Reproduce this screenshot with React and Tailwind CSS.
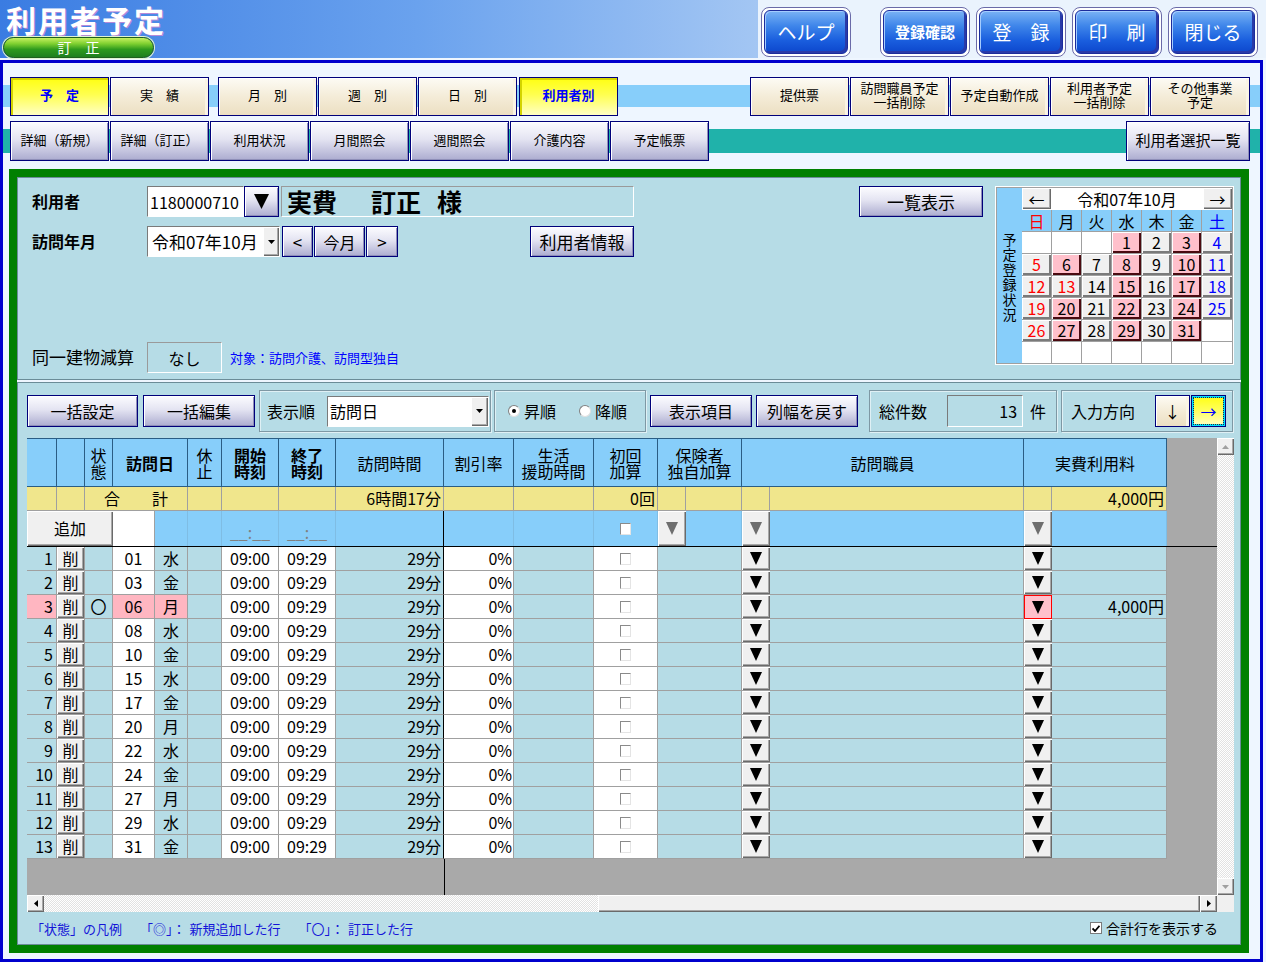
import React from 'react';

const SUNKEN = 'border border-t-[#7a7a7a] border-l-[#7a7a7a] border-b-white border-r-white';
const LAV = 'border border-[#00007a] bg-[linear-gradient(to_bottom,#fcfcff_0%,#e4e4f2_45%,#acacd0_100%)] shadow-[inset_1px_1px_0_#ffffff,inset_-1px_-1px_0_#8e8eb8]';
const BEIGE = 'border border-[#00007a] bg-[linear-gradient(to_bottom,#fdfbf4_0%,#f4ecd8_50%,#ecdfc2_100%)] shadow-[inset_1px_1px_0_#ffffff,inset_-3px_0_0_#faf4e4]';
const YELLOW = 'border border-[#00007a] bg-[linear-gradient(to_bottom,#ffff10_0%,#ffff50_45%,#ffffc4_100%)] shadow-[inset_2px_2px_0_#d4d400]';
const RAISED = 'bg-[#f0f0f0] shadow-[inset_1px_1px_0_#ffffff,inset_-1px_-1px_0_#6a6a6a,inset_-2px_-2px_0_#a8a8a8]';
const DITHER = 'bg-[image:repeating-conic-gradient(#ffffff_0_25%,#e2e2e2_0_50%)] bg-[length:2px_2px]';

function Tri({ w = 12, h = 13, color = '#000000', up = false }) {
  const d = up ? `M0 ${h}H${w}L${w / 2} 0Z` : `M0 0H${w}L${w / 2} ${h}Z`;
  return (
    <svg width={w} height={h} viewBox={`0 0 ${w} ${h}`}>
      <path d={d} fill={color} />
    </svg>
  );
}

function TopBtn({ children, className = '' }) {
  return (
    <div className="h-[50px] w-[90px] rounded-[8px] border border-[#6a6aa8] bg-white p-[2px]">
      <div
        className={`flex h-full w-full items-center justify-center rounded-[6px] border border-[#1c2c9c] bg-[linear-gradient(to_bottom,#7ab2f5_0%,#3f86ea_35%,#1a5ede_70%,#0c46cc_100%)] pb-[2px] leading-none text-white shadow-[inset_-2px_-2px_0_#2a3aa8,inset_1px_1px_0_#a4ccff] ${className}`}
      >
        {children}
      </div>
    </div>
  );
}

function Header() {
  return (
    <div className="flex h-[58px]">
      <div className="flex w-[758px] flex-col bg-[linear-gradient(to_right,#3a7ce2,#6aa2ee_55%,#a3c6f3)] pl-[3px] pt-[3px]">
        <div className="h-[32px] pl-[3px] text-[30px] font-bold leading-[32px] tracking-[2px] text-white [text-shadow:1px_1px_0_#b68ad8]">
          利用者予定
        </div>
        <div className="mt-[2px] flex h-[21px] w-[151px] items-center justify-center rounded-full border border-[#1f5f1f] bg-[linear-gradient(to_bottom,#c6f060_0%,#7fd030_30%,#2e9a1e_60%,#1f7f1f_100%)] pb-px text-[14px] leading-none text-white shadow-[0_0_0_1px_#e0f4d0]">
          訂　正
        </div>
      </div>
      <div className="flex flex-1 items-start bg-[#eaf3fd] pl-[3px] pt-[7px]">
        <TopBtn className="text-[19px]">ヘルプ</TopBtn>
        <div className="ml-[29px] flex gap-[6px]">
          <TopBtn className="text-[15px] font-bold">登録確認</TopBtn>
          <TopBtn className="text-[19px]">登　録</TopBtn>
          <TopBtn className="text-[19px]">印　刷</TopBtn>
          <TopBtn className="text-[19px]">閉じる</TopBtn>
        </div>
      </div>
    </div>
  );
}

function Tab({ children, style = 'beige', className = '' }) {
  const look =
    style === 'yellow'
      ? `${YELLOW} font-bold text-[#0000ff]`
      : style === 'lav'
      ? LAV
      : BEIGE;
  return (
    <div
      className={`flex w-[99px] flex-col items-center justify-center pb-[3px] text-center text-[13px] leading-[14px] ${look} ${className}`}
    >
      {children}
    </div>
  );
}

function TabRows() {
  return (
    <>
      <div className="flex h-[39px] justify-between bg-[linear-gradient(to_bottom,transparent_8px,#87cefa_8px,#87cefa_30px,transparent_30px)] pl-[7px] pr-[10px]">
        <div className="flex">
          <div className="flex gap-px">
            <Tab style="yellow">予　定</Tab>
            <Tab>実　績</Tab>
          </div>
          <div className="ml-[9px] flex gap-px">
            <Tab>月　別</Tab>
            <Tab>週　別</Tab>
            <Tab>日　別</Tab>
            <Tab style="yellow" className="ml-px">利用者別</Tab>
          </div>
        </div>
        <div className="flex gap-px">
          <Tab>提供票</Tab>
          <Tab>
            <span>訪問職員予定</span>
            <span>一括削除</span>
          </Tab>
          <Tab>予定自動作成</Tab>
          <Tab>
            <span>利用者予定</span>
            <span>一括削除</span>
          </Tab>
          <Tab className="w-[100px]">
            <span>その他事業</span>
            <span>予定</span>
          </Tab>
        </div>
      </div>
      <div className="mt-[5px] flex h-[40px] justify-between bg-[linear-gradient(to_bottom,transparent_8px,#20b2aa_8px,#20b2aa_32px,transparent_32px)] pl-[7px] pr-[10px]">
        <div className="flex gap-px">
          <Tab style="lav">詳細（新規）</Tab>
          <Tab style="lav">詳細（訂正）</Tab>
          <Tab style="lav">利用状況</Tab>
          <Tab style="lav">月間照会</Tab>
          <Tab style="lav">週間照会</Tab>
          <Tab style="lav">介護内容</Tab>
          <Tab style="lav">予定帳票</Tab>
        </div>
        <Tab style="lav" className="w-[124px] text-[15px]">利用者選択一覧</Tab>
      </div>
    </>
  );
}

const PINK_DAYS = [1, 3, 6, 8, 10, 15, 17, 20, 22, 24, 27, 29, 31];
const RED_DAYS = [5, 12, 13, 19, 26];
const BLUE_DAYS = [4, 11, 18, 25];
const WEEKS = [
  [null, null, null, 1, 2, 3, 4],
  [5, 6, 7, 8, 9, 10, 11],
  [12, 13, 14, 15, 16, 17, 18],
  [19, 20, 21, 22, 23, 24, 25],
  [26, 27, 28, 29, 30, 31, null],
  [null, null, null, null, null, null, null],
];

function DayCell({ d }) {
  let look = '';
  if (d) {
    look = PINK_DAYS.includes(d)
      ? 'bg-[#ffc0cb] shadow-[inset_1px_1px_0_#ffffff,inset_-2px_-2px_0_#4a0a10]'
      : 'bg-[#f0f0f0] shadow-[inset_1px_1px_0_#ffffff,inset_-2px_-2px_0_#7a7a7a]';
  }
  const color = RED_DAYS.includes(d) ? 'text-[#ff0000]' : BLUE_DAYS.includes(d) ? 'text-[#0000ff]' : 'text-black';
  return (
    <div className="h-[22px] w-[30px] border-r border-t border-[#a0a0a0] bg-white last:border-r-0">
      {d && (
        <div className={`flex h-full w-full items-center justify-center pb-px text-[16px] leading-none ${look} ${color}`}>{d}</div>
      )}
    </div>
  );
}

function Calendar() {
  const wds = ['日', '月', '火', '水', '木', '金', '土'];
  return (
    <div className="ml-[12px] flex h-[179px] w-[239px] border border-white">
      <div className="flex flex-1 border border-[#a0a0a0]">
        <div className="flex w-[25px] flex-col items-center justify-center gap-px bg-[#87cefa] pt-[2px] text-[14px] leading-[14px]">
          {'予定登録状況'.split('').map((c) => (
            <span key={c}>{c}</span>
          ))}
        </div>
        <div className="flex w-[210px] flex-col">
          <div className="flex h-[22px] gap-px bg-white pb-px">
            <div className={`flex w-[29px] items-center justify-center text-[16px] leading-none ${RAISED}`}>←</div>
            <div className="flex w-[150px] items-center justify-center text-[16px] leading-none">令和07年10月</div>
            <div className={`flex w-[29px] items-center justify-center text-[16px] leading-none ${RAISED}`}>→</div>
          </div>
          <div className="flex h-[21px] bg-[#87cefa]">
            {wds.map((w, i) => (
              <div
                key={w}
                className={`flex w-[30px] items-center justify-center border-r border-[#a0a0a0] text-[16px] leading-none last:border-r-0 ${
                  i === 0 ? 'text-[#ff0000]' : i === 6 ? 'text-[#0000ff]' : 'text-black'
                }`}
              >
                {w}
              </div>
            ))}
          </div>
          {WEEKS.map((wk, i) => (
            <div key={i} className="flex">
              {wk.map((d, j) => (
                <DayCell key={j} d={d} />
              ))}
            </div>
          ))}
        </div>
      </div>
    </div>
  );
}

function TopPanel() {
  return (
    <div className="flex h-[203px] border border-[#6b8c98] bg-[#b6dce6] pt-[8px]">
      <div className="flex w-[616px] flex-col pl-[14px]">
        <div className="flex h-[31px]">
          <div className="flex w-[115px] items-center pb-[2px] text-[16px] font-bold leading-none">利用者</div>
          <div className={`flex w-[97px] items-center bg-white pl-[2px] text-[16px] leading-none ${SUNKEN}`}>1180000710</div>
          <div className={`flex w-[35px] items-center justify-center ${LAV}`}>
            <Tri w={15} h={15} />
          </div>
          <div className="ml-[2px] flex w-[353px] items-center border border-b-white border-l-[#9a9a9a] border-r-white border-t-[#9a9a9a] pl-[5px] text-[25px] font-bold leading-none">
            <span>実費</span>
            <span className="ml-[34px]">訂正</span>
            <span className="ml-[16px]">様</span>
          </div>
        </div>
        <div className="mt-[9px] flex h-[31px]">
          <div className="flex w-[115px] items-center pb-[2px] text-[16px] font-bold leading-none">訪問年月</div>
          <div className={`flex w-[133px] items-center bg-white ${SUNKEN}`}>
            <span className="flex-1 pl-[4px] text-[17px] leading-none">令和07年10月</span>
            <div className={`flex h-full w-[16px] items-center justify-center ${RAISED}`}>
              <Tri w={7} h={4} />
            </div>
          </div>
          <div className={`ml-[2px] flex w-[31px] items-center justify-center text-[17px] leading-none ${LAV}`}>&lt;</div>
          <div className={`ml-[1px] flex w-[51px] items-center justify-center text-[16px] leading-none ${LAV}`}>今月</div>
          <div className={`ml-[1px] flex w-[32px] items-center justify-center text-[17px] leading-none ${LAV}`}>&gt;</div>
          <div className={`ml-auto flex w-[104px] items-center justify-center text-[17px] leading-none ${LAV}`}>利用者情報</div>
        </div>
        <div className="mt-[85px] flex h-[31px] items-center">
          <div className="w-[115px] pb-[2px] text-[17px] leading-none">同一建物減算</div>
          <div className="flex h-full w-[75px] items-center justify-center border border-b-white border-l-[#9a9a9a] border-r-white border-t-[#9a9a9a] text-[16px] leading-none">
            なし
          </div>
          <div className="ml-[8px] text-[13px] leading-none text-[#0000ff]">対象：訪問介護、訪問型独自</div>
        </div>
      </div>
      <div className={`ml-[225px] flex h-[31px] w-[124px] items-center justify-center text-[17px] leading-none ${LAV}`}>一覧表示</div>
      <Calendar />
    </div>
  );
}

const GROUP = 'flex h-[42px] items-center border border-[#7e98a4] shadow-[inset_1px_1px_0_#dff0f5,1px_1px_0_#dff0f5]';

function Radio({ on }) {
  return (
    <div className="flex h-[12px] w-[12px] items-center justify-center rounded-full border border-b-[#e0e0e0] border-l-[#808080] border-r-[#e0e0e0] border-t-[#808080] bg-white">
      {on && <div className="h-[4px] w-[4px] rounded-full bg-black" />}
    </div>
  );
}

function Toolbar() {
  return (
    <div className="ml-[9px] mt-[7px] flex h-[42px] items-center text-[16px] leading-none">
      <div className={`flex h-[32px] w-[111px] items-center justify-center pb-px ${LAV}`}>一括設定</div>
      <div className={`ml-[5px] flex h-[32px] w-[112px] items-center justify-center pb-px ${LAV}`}>一括編集</div>
      <div className={`ml-[4px] w-[232px] pl-[7px] ${GROUP}`}>
        <span>表示順</span>
        <div className={`ml-[12px] flex h-[31px] w-[162px] items-center bg-white ${SUNKEN}`}>
          <span className="flex-1 pl-[2px]">訪問日</span>
          <div className={`flex h-full w-[17px] items-center justify-center ${RAISED}`}>
            <Tri w={7} h={4} />
          </div>
        </div>
      </div>
      <div className={`ml-[3px] w-[152px] pl-[13px] ${GROUP}`}>
        <Radio on />
        <span className="ml-[4px]">昇順</span>
        <div className="ml-[23px]">
          <Radio />
        </div>
        <span className="ml-[4px]">降順</span>
      </div>
      <div className={`ml-[4px] flex h-[32px] w-[102px] items-center justify-center pb-px ${LAV}`}>表示項目</div>
      <div className={`ml-[4px] flex h-[32px] w-[102px] items-center justify-center pb-px ${LAV}`}>列幅を戻す</div>
      <div className={`ml-[11px] w-[188px] pl-[9px] ${GROUP}`}>
        <span>総件数</span>
        <div className={`ml-[20px] flex h-[32px] w-[76px] items-center justify-end pr-[5px] ${SUNKEN}`}>13</div>
        <span className="ml-[7px]">件</span>
      </div>
      <div className={`ml-[4px] w-[172px] pl-[9px] ${GROUP}`}>
        <span>入力方向</span>
        <div className={`ml-[20px] flex h-[32px] w-[35px] items-center justify-center ${BEIGE}`}>↓</div>
        <div className="ml-[1px] flex h-[32px] w-[35px] items-center justify-center border border-[#00007a] bg-[linear-gradient(to_bottom,#ffff10,#ffff60_50%,#ffffc8)] p-[1px] shadow-[inset_0_0_0_2px_#00e0ff]">
          <div className="flex h-full w-full items-center justify-center border border-dotted border-[#303030] text-[#0000ff]">→</div>
        </div>
      </div>
    </div>
  );
}

const HC = 'flex h-full flex-col items-center justify-center border-b border-r border-t border-[#2a5d84] bg-[#87cefa] text-center text-[16px] leading-[16px]';
const SC = 'flex h-full items-center border-b border-r border-[#a0a0a0] bg-[#f0e68c]';
const AC = 'h-full border-r border-[#7fbde4] bg-[#87cefa]';
const DC = 'flex h-full items-center border-b border-r border-[#a0a0a0]';

function CheckBox() {
  return <div className="h-[12px] w-[11px] border border-b-[#e4e4e4] border-l-[#8a8a8a] border-r-[#e4e4e4] border-t-[#8a8a8a] bg-white" />;
}

function GridHeader() {
  return (
    <div className="flex h-[49px]">
      <div className={`${HC} w-[30px]`} />
      <div className={`${HC} w-[28px]`} />
      <div className={`${HC} w-[28px]`}>
        <span>状</span>
        <span>態</span>
      </div>
      <div className={`${HC} w-[75px] font-bold`}>訪問日</div>
      <div className={`${HC} w-[34px]`}>
        <span>休</span>
        <span>止</span>
      </div>
      <div className={`${HC} w-[57px] font-bold`}>
        <span>開始</span>
        <span>時刻</span>
      </div>
      <div className={`${HC} w-[57px] font-bold`}>
        <span>終了</span>
        <span>時刻</span>
      </div>
      <div className={`${HC} w-[108px]`}>訪問時間</div>
      <div className={`${HC} w-[70px]`}>割引率</div>
      <div className={`${HC} w-[80px]`}>
        <span>生活</span>
        <span>援助時間</span>
      </div>
      <div className={`${HC} w-[64px]`}>
        <span>初回</span>
        <span>加算</span>
      </div>
      <div className={`${HC} w-[84px]`}>
        <span>保険者</span>
        <span>独自加算</span>
      </div>
      <div className={`${HC} w-[282px]`}>訪問職員</div>
      <div className={`${HC} w-[143px]`}>実費利用料</div>
    </div>
  );
}

function SumRow() {
  return (
    <div className="flex h-[24px] text-[16px] leading-none">
      <div className={`${SC} w-[30px] bg-[#b6dce6]`} />
      <div className={`${SC} w-[28px] bg-[#b6dce6]`} />
      <div className={`${SC} w-[103px] justify-center pb-px`}>合　　計</div>
      <div className={`${SC} w-[34px]`} />
      <div className={`${SC} w-[57px]`} />
      <div className={`${SC} w-[57px]`} />
      <div className={`${SC} w-[108px] justify-end pb-px pr-[2px]`}>6時間17分</div>
      <div className={`${SC} w-[70px]`} />
      <div className={`${SC} w-[80px]`} />
      <div className={`${SC} w-[64px] justify-end pb-px pr-[2px]`}>0回</div>
      <div className={`${SC} w-[28px]`} />
      <div className={`${SC} w-[56px]`} />
      <div className={`${SC} w-[28px]`} />
      <div className={`${SC} w-[254px]`} />
      <div className={`${SC} w-[28px]`} />
      <div className={`${SC} w-[115px] justify-end pb-px pr-[2px]`}>4,000円</div>
    </div>
  );
}

function AddRow() {
  const ddBtn = `flex h-full w-[28px] items-center justify-center ${RAISED}`;
  return (
    <div className="flex h-[36px] border-b border-black text-[16px] leading-none">
      <div className={`flex h-full w-[86px] items-center justify-center pb-px ${RAISED}`}>追加</div>
      <div className="h-full w-[42px] border-r border-[#a0a0a0] bg-white" />
      <div className={`${AC} w-[33px]`} />
      <div className={`${AC} w-[34px]`} />
      <div className={`${AC} flex w-[57px] items-end justify-center pb-[6px] text-[#808080]`}>__:__</div>
      <div className={`${AC} flex w-[57px] items-end justify-center pb-[6px] text-[#808080]`}>__:__</div>
      <div className="h-full w-[108px] border-r border-black bg-[#87cefa]" />
      <div className={`${AC} w-[70px]`} />
      <div className={`${AC} w-[80px]`} />
      <div className={`${AC} flex w-[64px] items-center justify-center`}>
        <CheckBox />
      </div>
      <div className={ddBtn}>
        <Tri color="#6e6e6e" />
      </div>
      <div className={`${AC} w-[56px]`} />
      <div className={ddBtn}>
        <Tri color="#6e6e6e" />
      </div>
      <div className={`${AC} w-[254px]`} />
      <div className={ddBtn}>
        <Tri color="#6e6e6e" />
      </div>
      <div className={`${AC} w-[115px]`} />
    </div>
  );
}

const ROWS = [
  ['01', '水'], ['03', '金'], ['06', '月'], ['08', '水'], ['10', '金'], ['15', '水'], ['17', '金'],
  ['20', '月'], ['22', '水'], ['24', '金'], ['27', '月'], ['29', '水'], ['31', '金'],
];

function DataRow({ n, day, wd }) {
  const edited = n === 3;
  const lb = edited ? 'bg-[#ffb6c1]' : 'bg-[#b6dce6]';
  const ddBtn = `flex h-full w-[28px] items-center justify-center border-b border-[#a0a0a0] ${RAISED}`;
  return (
    <div className="flex h-[24px] text-[16px] leading-none">
      <div className={`${DC} w-[30px] justify-end pb-px pr-[3px] ${lb}`}>{n}</div>
      <div className={`${DC} w-[28px] justify-center pb-px ${RAISED}`}>削</div>
      <div className={`${DC} w-[28px] justify-center bg-[#b6dce6] pb-px`}>{edited ? '〇' : ''}</div>
      <div className={`${DC} w-[42px] justify-center pb-px ${edited ? 'bg-[#ffb6c1]' : 'bg-white'}`}>{day}</div>
      <div className={`${DC} w-[33px] justify-center pb-px ${lb}`}>{wd}</div>
      <div className={`${DC} w-[34px] bg-[#b6dce6]`} />
      <div className={`${DC} w-[57px] justify-center bg-white pb-px`}>09:00</div>
      <div className={`${DC} w-[57px] justify-center bg-white pb-px`}>09:29</div>
      <div className={`${DC} w-[108px] justify-end border-r-black bg-[#b6dce6] pb-px pr-[2px]`}>29分</div>
      <div className={`${DC} w-[70px] justify-end bg-white pb-px pr-[1px]`}>0%</div>
      <div className={`${DC} w-[80px] bg-[#b6dce6]`} />
      <div className={`${DC} w-[64px] justify-center bg-white`}>
        <CheckBox />
      </div>
      <div className={`${DC} w-[84px] bg-[#b6dce6]`} />
      <div className={ddBtn}>
        <Tri />
      </div>
      <div className={`${DC} w-[254px] bg-[#b6dce6]`} />
      {edited ? (
        <div className="flex h-full w-[28px] items-center justify-center border border-[#ff0000] bg-[#ffc0cb]">
          <Tri />
        </div>
      ) : (
        <div className={ddBtn}>
          <Tri />
        </div>
      )}
      <div className={`${DC} w-[115px] justify-end bg-[#b6dce6] pb-px pr-[2px]`}>{edited ? '4,000円' : ''}</div>
    </div>
  );
}

function SBtn({ children }) {
  return <div className={`flex h-[17px] w-[17px] shrink-0 items-center justify-center ${RAISED}`}>{children}</div>;
}

function Grid() {
  return (
    <div className="ml-[9px] mt-[6px] flex h-[474px] w-[1207px] flex-col bg-[#a9a9a9]">
      <div className="flex h-[457px]">
        <div className="flex w-[1190px] flex-col">
          <GridHeader />
          <SumRow />
          <AddRow />
          {ROWS.map(([d, w], i) => (
            <DataRow key={d} n={i + 1} day={d} wd={w} />
          ))}
          <div className="flex-1">
            <div className="h-full w-[418px] border-r border-black" />
          </div>
        </div>
        <div className={`flex w-[17px] flex-col justify-between ${DITHER}`}>
          <SBtn>
            <Tri w={7} h={4} up color="#a0a0a0" />
          </SBtn>
          <SBtn>
            <Tri w={7} h={4} color="#a0a0a0" />
          </SBtn>
        </div>
      </div>
      <div className="flex h-[17px]">
        <SBtn>
          <svg width="4" height="7" viewBox="0 0 4 7">
            <path d="M4 0V7L0 3.5Z" fill="#000000" />
          </svg>
        </SBtn>
        <div className={`w-[554px] ${DITHER}`} />
        <div className={`w-[602px] ${RAISED}`} />
        <SBtn>
          <svg width="4" height="7" viewBox="0 0 4 7">
            <path d="M0 0V7L4 3.5Z" fill="#000000" />
          </svg>
        </SBtn>
        <div className="w-[17px] bg-[#f0f0f0]" />
      </div>
    </div>
  );
}

function Legend() {
  return (
    <div className="mt-[8px] flex h-[16px] items-center justify-between pl-[13px] pr-[22px] text-[13px] leading-none">
      <div className="flex text-[#1414d8]">
        <span>「状態」の凡例</span>
        <span className="ml-[18px]">「◎」：</span>
        <span className="ml-[4px]">新規追加した行</span>
        <span className="ml-[18px]">「〇」：</span>
        <span className="ml-[4px]">訂正した行</span>
      </div>
      <div className="flex items-center text-[14px]">
        <div className="flex h-[12px] w-[12px] items-center justify-center border border-[#7a7a7a] bg-white">
          <svg width="8" height="7" viewBox="0 0 8 7">
            <path d="M0.5 3.5L3 6L7.5 0.8" stroke="#000000" strokeWidth="1.8" fill="none" />
          </svg>
        </div>
        <span className="ml-[4px]">合計行を表示する</span>
      </div>
    </div>
  );
}

export default function App() {
  return (
    <div className="h-[962px] w-[1266px] overflow-hidden bg-[#eef6ff] font-['Noto_Sans_CJK_JP','Noto_Sans',sans-serif] text-black">
      <Header />
      <div className="mt-[2px] flex h-[902px] w-[1263px] flex-col border-[3px] border-[#0000cd] pt-[14px]">
        <TabRows />
        <div className="mb-[6px] ml-[6px] mt-[8px] flex w-[1240px] flex-1 flex-col border-[8px] border-[#008000] bg-[#eef6ff]">
          <TopPanel />
          <div className="mt-[2px] flex flex-1 flex-col border border-[#6b8c98] bg-[#b6dce6]">
            <Toolbar />
            <Grid />
            <Legend />
          </div>
        </div>
      </div>
    </div>
  );
}
